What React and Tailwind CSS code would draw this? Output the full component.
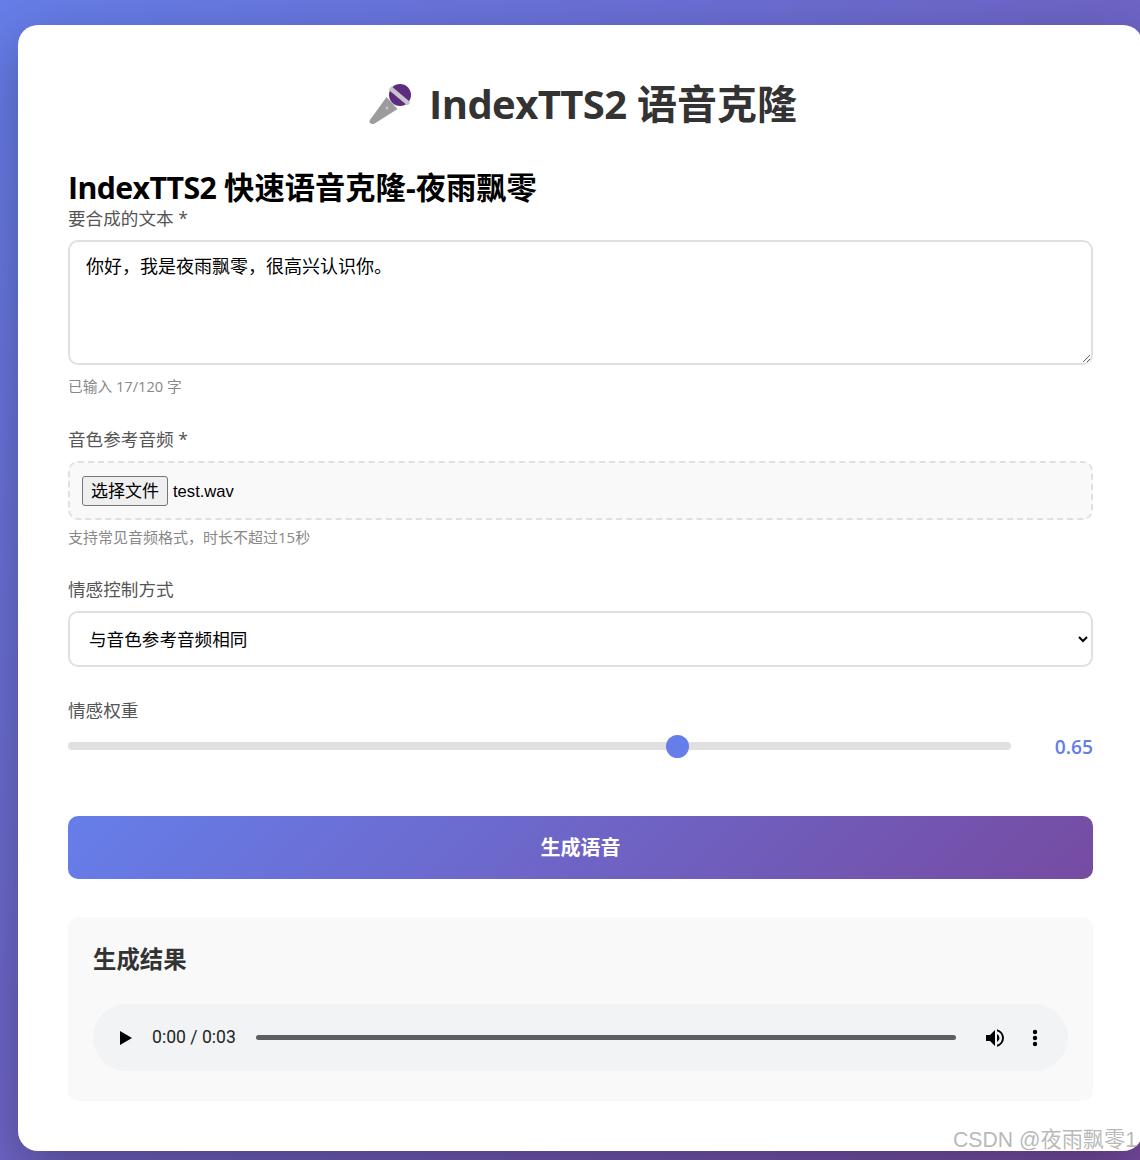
import React from "react";

function MicIcon() {
  return (
    <svg width="52" height="48" viewBox="0 0 52 48">
      <path d="M22.5 17 L33.5 29 L11.1 43.2 Q8 45 6 43 Q4.5 41 6.9 38.8 Z" fill="#9c9c9c" />
      <circle cx="23" cy="28" r="1.4" fill="#c6c6c6" />
      <circle cx="36" cy="15" r="11" fill="#5c2d7e" />
      <path d="M26 8 L45 24" stroke="#c9c5cd" strokeWidth="4.5" />
    </svg>
  );
}

function AudioBar() {
  return (
    <div className="flex h-[67px] items-center rounded-full bg-[#f1f3f4] pl-[26px] pr-[26px] font-['Roboto',sans-serif] text-[#1f1f1f]">
      <svg width="14" height="16" viewBox="0 0 14 16" className="mr-[19px]">
        <path d="M1 1 L13 8 L1 15 Z" fill="#000" />
      </svg>
      <span className="w-[84px] text-[17.6px] whitespace-nowrap">0:00 / 0:03</span>
      <div className="ml-5 h-[5px] flex-1 rounded-full bg-[#5e5e5e]" />
      <svg width="24" height="24" viewBox="0 0 24 24" className="ml-[27px]">
        <path
          d="M3 9v6h4l5 5V4L7 9H3zm13.5 3A4.5 4.5 0 0 0 14 7.97v8.05A4.5 4.5 0 0 0 16.5 12zM14 3.23v2.06a7 7 0 0 1 0 13.42v2.06a9 9 0 0 0 0-17.54z"
          fill="#000"
        />
      </svg>
      <svg width="6" height="18" viewBox="0 0 6 18" className="ml-[25px] mr-[4px]">
        <circle cx="3" cy="3" r="2.2" fill="#000" />
        <circle cx="3" cy="9" r="2.2" fill="#000" />
        <circle cx="3" cy="15" r="2.2" fill="#000" />
      </svg>
    </div>
  );
}

export default function App() {
  return (
    <div className="relative h-[1160px] w-[1140px] overflow-hidden bg-[linear-gradient(135deg,#667eea,#764ba2)] pl-[18px] pt-[25px] font-['Open_Sans','Noto_Sans_CJK_SC',sans-serif]">
      <div className="h-[1126px] w-[1125px] rounded-[20px] bg-white px-[50px] pt-[49px] shadow-[0_20px_60px_rgba(0,0,0,0.3)]">
        <h1 className="flex h-[60px] items-center justify-center gap-[13px] text-[40px] font-bold text-[#333]">
          <MicIcon />
          <span>
            <span className="tracking-[-0.6px]">IndexTTS2</span> 语音克隆
          </span>
        </h1>

        <h2 className="mt-[35px] text-[30.3px] leading-[38px] font-bold text-black">
          <span className="tracking-[-0.6px]">IndexTTS2</span> 快速语音克隆-夜雨飘零
        </h2>

        <label className="block text-[17.6px] leading-[22px] text-[#555]">要合成的文本 *</label>
        <textarea
          className="mt-[11px] block h-[125px] w-full rounded-[10px] border-2 border-[#e0e0e0] px-4 py-3 text-[18px] leading-[24px] text-black outline-none"
          defaultValue="你好，我是夜雨飘零，很高兴认识你。"
        />
        <p className="mt-[11px] text-[14.7px] leading-5 text-[#888]">已输入 17/120 字</p>

        <label className="mt-[31px] block text-[17.6px] leading-[24px] text-[#555]">音色参考音频 *</label>
        <div className="mt-[10px] flex h-[59px] items-center gap-[5px] rounded-[10px] border-2 border-dashed border-[#e0e0e0] bg-[#f9f9f9] px-3">
          <button className="h-[30px] w-[86px] rounded-[3px] border border-[#767676] bg-[#efefef] text-[17px] text-black">选择文件</button>
          <span className="pt-[3px] font-['Liberation_Sans',sans-serif] text-[16.6px] text-black">test.wav</span>
        </div>
        <p className="mt-[7px] text-[15px] leading-5 text-[#888]">支持常见音频格式，时长不超过15秒</p>

        <label className="mt-[30px] block text-[17.6px] leading-[24px] text-[#555]">情感控制方式</label>
        <select className="mt-[10px] block h-[56px] w-full rounded-[10px] border-2 border-[#e0e0e0] bg-white px-[15px] text-[17.6px] text-black outline-none">
          <option>与音色参考音频相同</option>
        </select>

        <label className="mt-[31px] block text-[17.6px] leading-[24px] text-[#555]">情感权重</label>
        <div className="mt-[12px] flex h-[24px] items-center">
          <input
            type="range"
            min="0"
            max="1"
            step="0.05"
            defaultValue="0.65"
            className="h-2 w-[943px] appearance-none rounded-full bg-[#e0e0e0] [&::-webkit-slider-thumb]:h-[23px] [&::-webkit-slider-thumb]:w-[23px] [&::-webkit-slider-thumb]:appearance-none [&::-webkit-slider-thumb]:rounded-full [&::-webkit-slider-thumb]:bg-[#667eea]"
          />
          <span className="flex-1 pt-[2px] text-right text-[19.2px] font-semibold text-[#667eea]">0.65</span>
        </div>

        <button className="mt-[58px] block h-[63px] w-full rounded-[10px] bg-[linear-gradient(135deg,#667eea,#764ba2)] text-[20px] font-bold text-white">
          生成语音
        </button>

        <section className="mt-[38px] h-[184px] rounded-[10px] bg-[#f9f9f9] px-[25px] pt-[25px]">
          <h3 className="text-[23.4px] leading-[34px] font-bold text-[#333]">生成结果</h3>
          <div className="mt-[28px]">
            <AudioBar />
          </div>
        </section>
      </div>

      <span className="absolute right-[3px] bottom-[8px] text-[21.2px] leading-6 whitespace-nowrap text-[#999]/70 font-['Liberation_Sans','Noto_Sans_CJK_SC',sans-serif]">
        CSDN @夜雨飘零1
      </span>
    </div>
  );
}
